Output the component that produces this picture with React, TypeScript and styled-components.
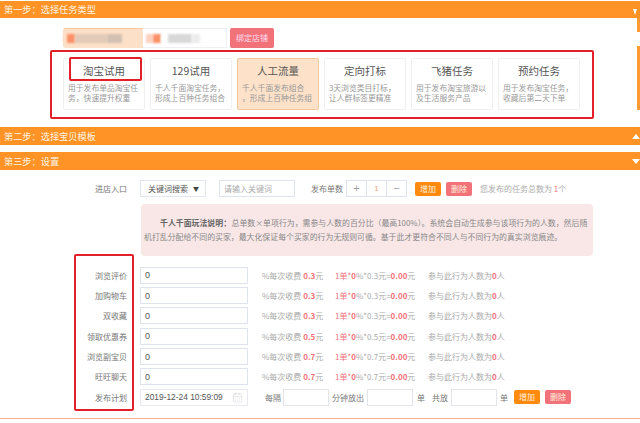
import React from "react";
import styled, { createGlobalStyle } from "styled-components";
import { CalendarDays } from "lucide-react";

const GlobalStyle = createGlobalStyle`
  html, body {
    margin: 0;
    padding: 0;
    background: #fff;
  }
  body {
    width: 640px;
    height: 423px;
    overflow: hidden;
    font-family: "Noto Sans CJK SC", "Liberation Sans", sans-serif;
    color: #888;
  }
`;

const tasks = [
  { title: "淘宝试用", lines: ["用于发布单品淘宝任", "务，快速提升权重"] },
  { title: "129试用", lines: ["千人千面淘宝任务，", "形成上百种任务组合"] },
  { title: "人工流量", lines: ["千人千面发布组合", "，形成上百种任务组"], active: true },
  { title: "定向打标", lines: ["3天浏览类目打标，", "让人群标签更精准"] },
  { title: "飞猪任务", lines: ["用于发布淘宝旅游以", "及生活服务产品"] },
  { title: "预约任务", lines: ["用于发布淘宝任务，", "收藏后第二天下单"] },
];

const behaviours = [
  { label: "浏览评价", fee: "0.3" },
  { label: "加购物车", fee: "0.3" },
  { label: "双收藏", fee: "0.3" },
  { label: "领取优惠券", fee: "0.5" },
  { label: "浏览副宝贝", fee: "0.7" },
  { label: "旺旺聊天", fee: "0.7" },
];

export default function App() {
  return (
    <>
      <GlobalStyle />
      <Page>
        <EdgeStrip $top={18} $height={14} />
        <EdgeStrip $top={46} $height={64} />

        <StepBar $dir="down" $small>第一步：选择任务类型</StepBar>
        <BindRow>
          <StoreName>
            <Patch $w={4} $c="#fde0c8" />
            <Patch $w={8} $c="#fb9068" />
            <Patch $w={32} $c="#e2cab8" />
            <Patch $w={15} $c="#d4c0b2" />
          </StoreName>
          <StoreNameRest>
            <Patch $w={7} $c="#fbd0c0" />
            <Patch $w={8} $c="#fb9068" />
            <Patch $w={7} $c="#fff" />
            <Patch $w={24} $c="#d8d8d8" />
            <Patch $w={8} $c="#ececec" />
          </StoreNameRest>
          <BindButton>绑定店铺</BindButton>
        </BindRow>
        <TaskBox>
          {tasks.map((t, i) => (
            <TaskCard key={t.title} $active={t.active}>
              <TaskTitle>{t.title}</TaskTitle>
              <TaskDesc>{t.lines[0]}<br />{t.lines[1]}</TaskDesc>
              {i === 0 && <TitleFrame />}
            </TaskCard>
          ))}
        </TaskBox>

        <StepBar $dir="up">第二步：选择宝贝模板</StepBar>
        <StepBar $dir="down">第三步：设置</StepBar>

        <Settings>
          <LabelFrame />
          <Row>
            <Label>进店入口</Label>
            <SelectBox>关键词搜索<Caret>▼</Caret></SelectBox>
            <KeywordInput placeholder="请输入关键词" />
            <InlineLabel>发布单数</InlineLabel>
            <Stepper>
              <StepCell>+</StepCell>
              <StepCell $value>1</StepCell>
              <StepCell>−</StepCell>
            </Stepper>
            <ActionButton $tone="add" $left={8}>增加</ActionButton>
            <ActionButton $tone="del" $left={5}>删除</ActionButton>
            <TotalText>您发布的任务总数为 <Hot>1</Hot>个</TotalText>
          </Row>
          <Note>
            <b>千人千面玩法说明：</b>总单数×单项行为，需参与人数的百分比（最高100%）。系统会自动生成参与该项行为的人数，然后随机打乱分配给不同的买家，最大化保证每个买家的行为无规则可循。基于此才更符合不同人与不同行为的真实浏览痕迹。
          </Note>
          <Rows>
            {behaviours.map((b) => (
              <Row key={b.label}>
                <Label>{b.label}</Label>
                <ValueInput defaultValue="0" />
                <FeeText>%每次收费 <HotBold>{b.fee}</HotBold>元</FeeText>
                <CalcText>
                  <Hot>1单*</Hot><HotBold>0</HotBold>%*{b.fee}元=<HotBold>0.00</HotBold>元
                </CalcText>
                <PeopleText>参与此行为人数为<HotBold>0</HotBold>人</PeopleText>
              </Row>
            ))}
            <Row>
              <Label>发布计划</Label>
              <DateField>
                2019-12-24 10:59:09
                <CalendarDays size={11} strokeWidth={1} color="#ccc" />
              </DateField>
              <PlanLabel $left={17}>每隔</PlanLabel>
              <PlanInput $left={2} />
              <PlanLabel $left={3}>分钟放出</PlanLabel>
              <PlanInput $left={3} />
              <PlanLabel $left={4}>单</PlanLabel>
              <PlanLabel $left={7}>共放</PlanLabel>
              <PlanInput $left={3} />
              <PlanLabel $left={3}>单</PlanLabel>
              <ActionButton $tone="add" $left={6}>增加</ActionButton>
              <ActionButton $tone="del" $left={5}>删除</ActionButton>
            </Row>
          </Rows>
        </Settings>
      </Page>
    </>
  );
}

const Page = styled.div`
  position: relative;
  width: 640px;
  height: 423px;
  padding-top: 1px;
  box-sizing: border-box;
  overflow: hidden;
`;

const EdgeStrip = styled.div<{ $top: number; $height: number }>`
  position: absolute;
  right: 0;
  top: ${(p) => p.$top}px;
  width: 3px;
  height: ${(p) => p.$height}px;
  background: #ff9a35;
`;

const StepBar = styled.div<{ $dir: "up" | "down"; $small?: boolean }>`
  position: relative;
  height: ${(p) => (p.$small ? 17 : 18)}px;
  line-height: ${(p) => (p.$small ? 17 : 18)}px;
  padding-left: 4px;
  background: #ff9326;
  color: #fff3e4;
  font-size: 9.2px;
  & + & {
    margin-top: 7px;
  }
  &::after {
    content: "";
    position: absolute;
    right: ${(p) => (p.$small ? 3 : 0)}px;
    top: ${(p) => (p.$small ? 8 : 7)}px;
    border-left: ${(p) => (p.$small ? 2 : 4)}px solid transparent;
    border-right: ${(p) => (p.$small ? 2 : 4)}px solid transparent;
    ${(p) => (p.$dir === "up" ? "border-bottom" : "border-top")}: ${(p) => (p.$small ? 6 : 5)}px solid #fff;
  }
`;

const BindRow = styled.div`
  display: flex;
  align-items: stretch;
  height: 20px;
  margin: 10px 0 2px 63px;
`;

const StoreName = styled.div`
  display: flex;
  align-items: center;
  box-sizing: border-box;
  width: 80px;
  background: #fde0c8;
  border-top: 1px solid #f8c8a0;
  border-radius: 3px 0 0 3px;
`;

const StoreNameRest = styled.div`
  display: flex;
  align-items: center;
  box-sizing: border-box;
  width: 84px;
  padding-left: 3px;
  border: 1px solid #eef0f5;
  border-left: 0;
`;

const Patch = styled.span<{ $w: number; $c: string }>`
  width: ${(p) => p.$w}px;
  height: 9px;
  background: ${(p) => p.$c};
  filter: blur(0.8px);
`;

const BindButton = styled.div`
  width: 44px;
  margin-left: 3px;
  border-radius: 2px;
  background: #f2727a;
  color: #fde;
  font-size: 8px;
  line-height: 20px;
  text-align: center;
`;

const TaskBox = styled.div`
  display: flex;
  gap: 5px;
  box-sizing: border-box;
  width: 544px;
  height: 69px;
  margin: 0 0 8px 50px;
  padding: 6px 0 0 11px;
  border: 2px solid #e3202a;
  border-radius: 2px;
`;

const TaskCard = styled.div<{ $active?: boolean }>`
  position: relative;
  box-sizing: border-box;
  width: 82px;
  height: 52px;
  padding: 3px 0 0 4px;
  border: 1px solid ${(p) => (p.$active ? "#f3c79c" : "#f0f0f2")};
  border-radius: 2px;
  background: ${(p) => (p.$active ? "#fde2c9" : "#fff")};
`;

const TaskTitle = styled.div`
  height: 18px;
  margin-left: -4px;
  color: #555;
  font-size: 10.5px;
  line-height: 18px;
  text-align: center;
`;

const TaskDesc = styled.div`
  margin-top: 2.5px;
  color: #999;
  font-size: 7.8px;
  line-height: 10.7px;
  white-space: nowrap;
`;

const TitleFrame = styled.div`
  position: absolute;
  left: 5px;
  top: -2px;
  width: 73px;
  height: 24px;
  box-sizing: border-box;
  border: 2px solid #e3202a;
  border-radius: 2px;
`;

const Settings = styled.div`
  position: relative;
  box-sizing: border-box;
  height: 249px;
  padding-top: 10px;
  border-bottom: 1px solid #ffaa88;
`;

const LabelFrame = styled.div`
  position: absolute;
  left: 74px;
  top: 84px;
  width: 60px;
  height: 157px;
  box-sizing: border-box;
  border: 2px solid #e3202a;
  border-radius: 2px;
`;

const Row = styled.div`
  display: flex;
  align-items: center;
  height: 17px;
`;

const Rows = styled.div`
  display: flex;
  flex-direction: column;
  gap: 3.33px;
  margin-top: 10.7px;
`;

const Label = styled.div`
  width: 127px;
  margin-right: 13px;
  color: #777;
  font-size: 8px;
  text-align: right;
  white-space: nowrap;
`;

const SelectBox = styled.div`
  display: flex;
  align-items: center;
  box-sizing: border-box;
  width: 66px;
  height: 17px;
  padding-left: 7px;
  border: 1px solid #e2e6ee;
  color: #555;
  font-size: 8px;
`;

const Caret = styled.span`
  margin-left: 5px;
  color: #444;
  font-size: 6px;
`;

const fieldBorder = "1px solid #dfe3ee";

const KeywordInput = styled.input`
  box-sizing: border-box;
  width: 76px;
  height: 17px;
  margin-left: 13px;
  padding: 0 4px;
  border: ${fieldBorder};
  outline: 0;
  font: 8px "Noto Sans CJK SC", sans-serif;
  &::placeholder {
    color: #aaa;
  }
`;

const InlineLabel = styled.span`
  margin-left: 16px;
  color: #777;
  font-size: 8px;
  white-space: nowrap;
`;

const Stepper = styled.div`
  display: flex;
  box-sizing: border-box;
  width: 61px;
  height: 17px;
  margin-left: 3px;
  border: ${fieldBorder};
`;

const StepCell = styled.div<{ $value?: boolean }>`
  flex: 1;
  border-left: ${fieldBorder};
  color: ${(p) => (p.$value ? "#f4a878" : "#a0a0a0")};
  font: ${(p) => (p.$value ? 8 : 11)}px/15px "Liberation Sans", sans-serif;
  text-align: center;
  &:first-child {
    border-left: 0;
  }
`;

const ActionButton = styled.div<{ $tone: "add" | "del"; $left: number }>`
  flex: none;
  width: 26px;
  height: 14px;
  margin-left: ${(p) => p.$left}px;
  border-radius: 2px;
  background: ${(p) => (p.$tone === "add" ? "#ff8a0d" : "#f2727a")};
  color: #ffeedd;
  font-size: 8px;
  line-height: 14px;
  text-align: center;
`;

const TotalText = styled.span`
  margin-left: 8px;
  color: #aaa;
  font-size: 8px;
  white-space: nowrap;
`;

const Hot = styled.span`
  color: #f2727a;
`;

const HotBold = styled(Hot)`
  font-weight: 700;
`;

const Note = styled.div`
  box-sizing: border-box;
  width: 452px;
  height: 52px;
  margin: 7px 0 0 141px;
  padding: 12px 0 0 3px;
  border-radius: 4px;
  background: #f9e7e7;
  color: #888;
  font-size: 7.9px;
  line-height: 14px;
  text-indent: 16px;
  b {
    color: #666;
    margin-right: 0.5px;
  }
`;

const ValueInput = styled.input`
  box-sizing: border-box;
  width: 108px;
  height: 17px;
  padding: 0 4px;
  border: ${fieldBorder};
  outline: 0;
  color: #555;
  font: 9px "Liberation Sans", sans-serif;
`;

const FeeText = styled.span`
  width: 73px;
  margin-left: 14px;
  color: #aaa;
  font-size: 8px;
  white-space: nowrap;
`;

const CalcText = styled.span`
  width: 93px;
  color: #aaa;
  font-size: 8px;
  white-space: nowrap;
`;

const PeopleText = styled.span`
  color: #aaa;
  font-size: 8px;
  white-space: nowrap;
`;

const DateField = styled.div`
  display: flex;
  align-items: center;
  justify-content: space-between;
  box-sizing: border-box;
  width: 108px;
  height: 17px;
  padding: 0 4px;
  border: 1px solid #e8eaf0;
  color: #555;
  font: 8.4px "Liberation Sans", sans-serif;
  white-space: nowrap;
`;

const PlanLabel = styled.span<{ $left: number }>`
  flex: none;
  margin-left: ${(p) => p.$left}px;
  color: #777;
  font-size: 8px;
  white-space: nowrap;
`;

const PlanInput = styled.input<{ $left: number }>`
  flex: none;
  box-sizing: border-box;
  width: 46px;
  height: 17px;
  margin-left: ${(p) => p.$left}px;
  border: 1px solid #e2e4ea;
  outline: 0;
`;
